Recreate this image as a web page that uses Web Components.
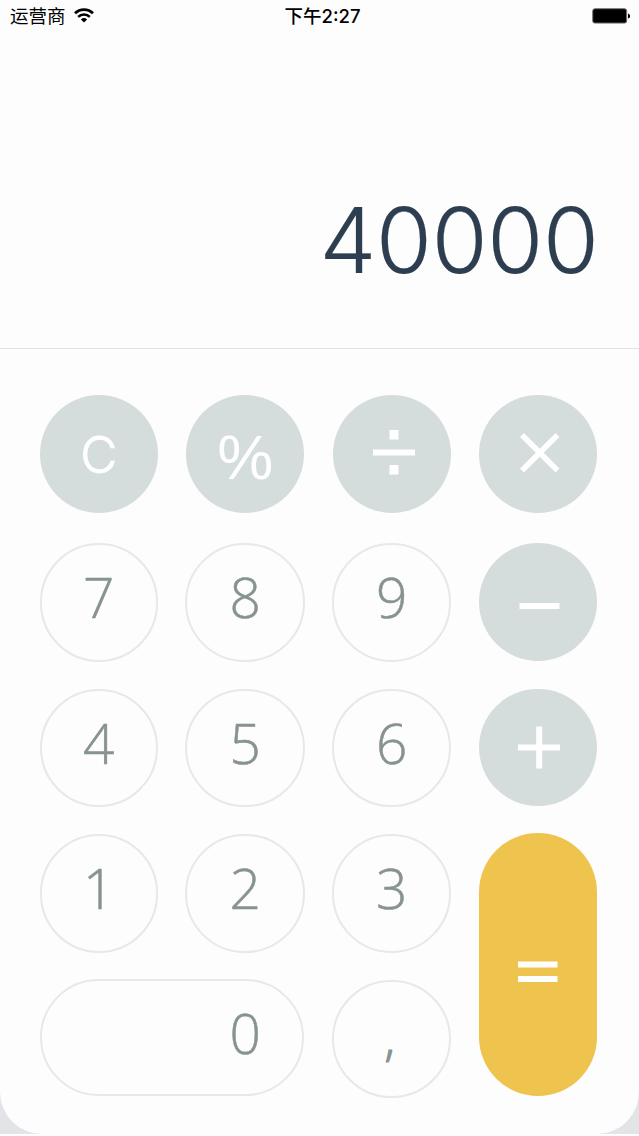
<!DOCTYPE html>
<html lang="zh-CN">
<head>
<meta charset="utf-8">
<title>计算器</title>
<style>
    body {
        margin: 0;
        background-color: #fdfdfd;
    }
</style>
</head>
<body>
<calc-app></calc-app>

<script>
class CalcStatusBar extends HTMLElement {
    constructor() {
        super();
        this.attachShadow({ mode: 'open' });
        this.shadowRoot.innerHTML = `
            <style>
            :host {
                display: grid;
                grid-template-columns: 1fr auto 1fr;
                align-items: center;
                height: 33px;
                box-sizing: border-box;
                padding: 0 8px 0 10px;
                color: #000000;
                font: 400 18.5px/33px "Inter", "Noto Sans CJK SC", sans-serif;
            }

            .carrier {
                display: flex;
                align-items: center;
                gap: 8.5px;
            }

            .carrier svg {
                margin-bottom: 2px;
            }

            .time {
                font-weight: 500;
                padding-left: 4px;
            }

            .battery {
                justify-self: end;
                margin-bottom: 1.6px;
            }

            svg {
                display: block;
            }
            </style>
            <div class="carrier">
                <span>${this.getAttribute('carrier')}</span>
                <svg width="20" height="15" viewBox="0 0 20 15" fill="none" stroke="#000" stroke-width="2.7">
                    <path d="M1 5.3A12.7 12.7 0 0 1 19 5.3"/>
                    <path d="M4.2 8.9A8.2 8.2 0 0 1 15.8 8.9"/>
                    <path d="M10 14.6L6.9 11.5A4.5 4.5 0 0 1 13.1 11.5Z" fill="#000" stroke="none"/>
                </svg>
            </div>
            <span class="time">${this.getAttribute('time')}</span>
            <svg class="battery" width="39" height="16" viewBox="0 0 39 16">
                <rect x=".7" y=".7" width="34" height="14.4" rx="2.2" fill="#000" stroke="#777"/>
                <path d="M36 5.5Q38.2 6 38.2 8T36 10.5Z" fill="#000"/>
            </svg>
        `;
    }
}

class CalcDisplay extends HTMLElement {
    constructor() {
        super();
        this.attachShadow({ mode: 'open' });
        this.shadowRoot.innerHTML = `
            <style>
            :host {
                display: flex;
                justify-content: flex-end;
                align-items: flex-end;
                height: 316px;
                box-sizing: border-box;
                padding: 0 40.5px 53px 0;
                border-bottom: 1px solid #e2e3e5;
                color: #2d3e50;
                font: 300 90.5px/110px "Inter", sans-serif;
                letter-spacing: -.3px;
                -webkit-text-stroke: .2px #2d3e50;
            }
            </style>
            <slot></slot>
        `;
    }
}

class CalcKey extends HTMLElement {
    constructor() {
        super();
        this.attachShadow({ mode: 'open' });
        this.shadowRoot.innerHTML = `
            <style>
            :host {
                display: flex;
                justify-content: center;
                align-items: flex-start;
                height: 118.6px;
                box-sizing: border-box;
                padding-top: 13px;
                border: 2px solid #ebe5ec;
                border-radius: 60px;
                color: #87938f;
                font: 300 55px/78px "Open Sans", sans-serif;
                -webkit-text-stroke: .5px #87938f;
            }

            :host([kind="operator"]) {
                width: 117.6px;
                height: 117.6px;
                margin-left: .6px;
                padding: 0;
                border: none;
                background-color: #d5dcdc;
                color: #ffffff;
                -webkit-text-stroke: 0;
            }

            :host([kind="equals"]) {
                grid-row: span 2;
                width: 117.6px;
                height: 263.5px;
                margin: -1.6px 0 0 .6px;
                padding: 0;
                border: none;
                background-color: #eec44f;
            }

            :host([kind="wide"]) {
                grid-column: span 2;
                justify-content: flex-end;
                height: 117px;
                margin: -.6px 1px 0 .6px;
                padding: 13px 41px 0 0;
            }

            ::slotted(svg) {
                display: block;
                flex: none;
            }
            </style>
            <slot></slot>
        `;
    }
}

class CalcKeypad extends HTMLElement {
    constructor() {
        super();
        this.attachShadow({ mode: 'open' });
        this.shadowRoot.innerHTML = `
            <style>
            :host {
                display: grid;
                grid-template-columns: 118.3px 119.4px 118.7px 118.6px;
                grid-template-rows: 120.4px repeat(4, 118px);
                gap: 27.6px;
                padding: 46px 0 0 39.5px;
            }

            .clear {
                font: 300 51px/119px "Inter", sans-serif;
                -webkit-text-stroke: .8px #ffffff;
            }

            .percent {
                font: 400 63px/125px "Liberation Sans", sans-serif;
                padding-left: 1px;
            }

            .comma {
                display: block;
                padding: 4px 4px 0 0;
                font-size: 48px;
                -webkit-text-stroke: 1.2px #87938f;
            }
            </style>
            <calc-key kind="operator"><span class="clear">C</span></calc-key>
            <calc-key kind="operator"><span class="percent">%</span></calc-key>
            <calc-key kind="operator">
                <svg width="118" height="118" fill="#fff">
                    <path d="M40 54.5h42v6H40zM56.5 35h9v9.5h-9zM56.5 70h9v9.5h-9z"/>
                </svg>
            </calc-key>
            <calc-key kind="operator">
                <svg width="118" height="118" stroke="#fff" stroke-width="5.6">
                    <path d="M43 40L78.5 75.5M78.5 40L43 75.5"/>
                </svg>
            </calc-key>
            <calc-key>7</calc-key>
            <calc-key>8</calc-key>
            <calc-key>9</calc-key>
            <calc-key kind="operator">
                <svg width="118" height="118" fill="#fff">
                    <path d="M40.5 60h40v6h-40z"/>
                </svg>
            </calc-key>
            <calc-key>4</calc-key>
            <calc-key>5</calc-key>
            <calc-key>6</calc-key>
            <calc-key kind="operator">
                <svg width="118" height="118" stroke="#fff" stroke-width="6">
                    <path d="M39 58.4h42M60.2 37.4v42"/>
                </svg>
            </calc-key>
            <calc-key>1</calc-key>
            <calc-key>2</calc-key>
            <calc-key>3</calc-key>
            <calc-key kind="equals">
                <svg width="118" height="263" fill="#fff">
                    <path d="M39 128.4h39.5v6H39zM39 143.1h39.5v6H39z"/>
                </svg>
            </calc-key>
            <calc-key kind="wide">0</calc-key>
            <calc-key><span class="comma">,</span></calc-key>
        `;
    }
}

class CalcApp extends HTMLElement {
    constructor() {
        super();
        this.attachShadow({ mode: 'open' });
        this.shadowRoot.innerHTML = `
            <style>
            :host {
                display: block;
                width: 639px;
                height: 1134px;
                background-color: #e3e4e7;
            }

            .screen {
                height: 1134px;
                border-radius: 0 0 42px 42px;
                background-color: #fdfdfd;
            }
            </style>
            <div class="screen">
                <calc-status-bar carrier="运营商" time="下午2:27"></calc-status-bar>
                <calc-display>40000</calc-display>
                <calc-keypad></calc-keypad>
            </div>
        `;
    }
}

customElements.define('calc-status-bar', CalcStatusBar);
customElements.define('calc-display', CalcDisplay);
customElements.define('calc-key', CalcKey);
customElements.define('calc-keypad', CalcKeypad);
customElements.define('calc-app', CalcApp);
</script>
</body>
</html>
